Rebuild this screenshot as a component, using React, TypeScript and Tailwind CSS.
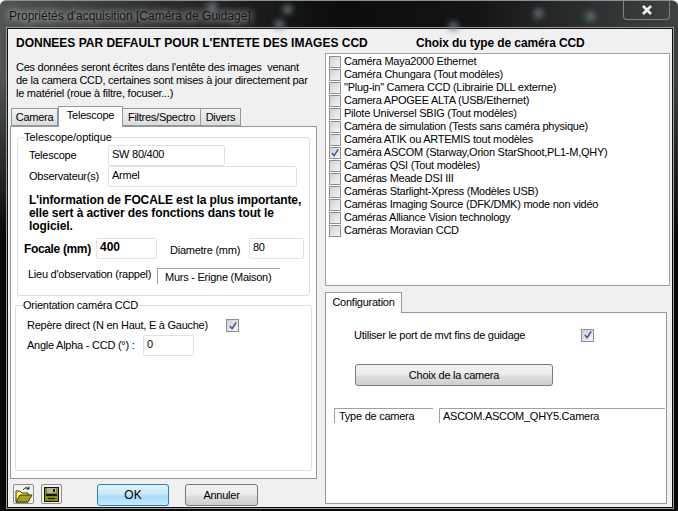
import React from "react";

const cameras: [string, boolean][] = [
  ["Caméra Maya2000 Ethernet", false],
  ["Caméra Chungara (Tout modèles)", false],
  ['"Plug-in" Camera CCD (Librairie DLL externe)', false],
  ["Camera APOGEE ALTA (USB/Ethernet)", false],
  ["Pilote Universel SBIG (Tout modèles)", false],
  ["Caméra de simulation (Tests sans caméra physique)", false],
  ["Caméra ATIK ou ARTEMIS tout modèles", false],
  ["Caméra ASCOM (Starway,Orion StarShoot,PL1-M,QHY)", true],
  ["Caméras QSI (Tout modèles)", false],
  ["Caméras Meade DSI III", false],
  ["Caméras Starlight-Xpress (Modèles USB)", false],
  ["Caméras Imaging Source (DFK/DMK) mode non vidéo", false],
  ["Caméras Alliance Vision technology", false],
  ["Caméras Moravian CCD", false],
];

function Check({ on, small }: { on: boolean; small?: boolean }) {
  return (
    <span className={`${small ? "w-[12px] h-[12px]" : "w-[13px] h-[13px]"} shrink-0 border border-[#8e8f8f] bg-[linear-gradient(135deg,#d0d0d0,#f6f6f6)] flex items-center justify-center`}>
      {on && (
        <svg width="10" height="10" viewBox="0 0 11 11">
          <path d="M2 5.5 L4.5 8.5 L9 1.5" fill="none" stroke="#3c5aa8" strokeWidth="1.8" />
        </svg>
      )}
    </span>
  );
}

function Tab({ label, active, w }: { label: string; active?: boolean; w: string }) {
  return (
    <div
      className={
        active
          ? `${w} h-[21px] -mb-px relative z-10 bg-white border border-b-0 border-[#8e9aa0] flex items-center justify-center pb-[3px] whitespace-nowrap`
          : `${w} h-[18px] bg-[linear-gradient(#f4f4f4,#dcdcdc)] border border-[#8e9aa0] -ml-px flex items-center justify-center whitespace-nowrap`
      }
    >
      {label}
    </div>
  );
}

function Field({ w, children, bold }: { w: string; children?: React.ReactNode; bold?: boolean }) {
  return (
    <div className={`${w} h-[21px] shrink-0 border border-[#dfe3e8] rounded-[2px] bg-white pl-[3px] pb-[3px] flex items-center whitespace-nowrap ${bold ? "font-bold text-[12px] tracking-normal" : ""}`}>
      {children}
    </div>
  );
}

function Folder() {
  return (
    <svg width="19" height="19" viewBox="0 0 19 19">
      <path d="M2 6 L2 17 L14 17 L14 8 L8 8 L6 6 Z" fill="#fff46a" stroke="#3a3a00" strokeWidth="1" />
      <path d="M2 17 L6 10 L18 10 L14 17 Z" fill="#a3a024" stroke="#3a3a00" strokeWidth="1" />
      <path d="M9 5 Q12 1 15 4 M15 4 L15 1.5 M15 4 L12.5 4" fill="none" stroke="#111" strokeWidth="1" />
    </svg>
  );
}

function Floppy() {
  return (
    <svg width="17" height="17" viewBox="0 0 17 17">
      <rect x="1" y="1" width="15" height="15" fill="#111" />
      <rect x="2" y="2" width="13" height="13" fill="#8a8a10" />
      <rect x="4" y="2" width="9" height="5" fill="#b4b4a0" />
      <rect x="10" y="3" width="2" height="3" fill="#111" />
      <rect x="3" y="8" width="11" height="2" fill="#111" />
      <rect x="4" y="10" width="9" height="5" fill="#8a8a10" />
      <rect x="5" y="12" width="7" height="1" fill="#111" />
    </svg>
  );
}

const stars = [
  "left-[276px] top-[4px]",
  "left-[268px] top-[19px]",
  "left-[442px] top-[21px]",
  "left-[527px] top-[8px]",
  "left-[579px] top-[11px]",
  "left-[201px] top-[1px]",
];

export default function App() {
  return (
    <div className="w-[678px] h-[511px] overflow-hidden rounded-t-[6px] border-t border-[#8c8f8f] bg-[linear-gradient(180deg,transparent_15%,#0a0a0a_45%),linear-gradient(90deg,#505454_0%,#2a2c2c_25%,#0c0c0c_50%,#141414_70%,#2e3131_88%,#3d4141_100%)] flex flex-col pl-[7px] pr-[5px] pb-[3px] text-[11px] tracking-[-0.25px] leading-[13px] text-black font-['Liberation_Sans',sans-serif]">
      <div className="h-[27px] shrink-0 flex items-start justify-between relative">
        {stars.map((s) => (
          <span key={s} className={`absolute ${s} w-[9px] h-[9px] rounded-full bg-[#6a7c84] blur-[3px]`} />
        ))}
        <div className="relative pl-[2px] pt-[7px] text-[12px] tracking-normal leading-[16px] text-[#141414] [text-shadow:0_0_7px_rgba(255,255,255,0.6),0_0_10px_rgba(255,255,255,0.5),0_0_12px_rgba(255,255,255,0.4)]">Propriétés d'acquisition [Caméra de Guidage]</div>
        <div className="w-[47px] h-[19px] mr-[3px] border border-t-0 border-[#7c8283] rounded-b-[4px] flex items-center justify-center">
          <svg width="10" height="10" viewBox="0 0 10 10">
            <path d="M1 1 L9 9 M9 1 L1 9" stroke="#f2f2f2" strokeWidth="2.6" />
          </svg>
        </div>
      </div>
      <div className="flex-1 min-h-0 bg-[#f0f0f0] border border-[#111] outline outline-1 outline-[#9a9d9d] flex">
        <div className="w-[317px] shrink-0 flex flex-col pl-[2px]">
          <div className="pl-[6px] pt-[7px] font-bold text-[12px] leading-[14px] tracking-normal whitespace-nowrap">DONNEES PAR DEFAULT POUR L'ENTETE DES IMAGES CCD</div>
          <div className="pl-[6px] pt-[11px] h-[55px] whitespace-nowrap shrink-0">
            Ces données seront écrites dans l'entête des images&nbsp; venant<br />
            de la camera CCD, certaines sont mises à jour directement par<br />
            le matériel (roue à filtre, focuser...)
          </div>
          <div className="flex items-end pl-[2px] h-[21px] shrink-0 relative">
            <Tab label="Camera" w="w-[47px]" />
            <Tab label="Telescope" active w="w-[65px]" />
            <Tab label="Filtres/Spectro" w="w-[79px]" />
            <Tab label="Divers" w="w-[41px]" />
          </div>
          <div className="w-[307px] h-[353px] bg-white border border-[#8e9aa0] pt-[4px] px-[4px] flex flex-col gap-[3px] shrink-0">
            <fieldset className="h-[165px] ml-[2px] mr-[2px] border border-[#d5dfe5] rounded-[3px] shrink-0">
              <legend className="ml-[6px] leading-[13px] whitespace-nowrap tracking-[-0.05px]">Telescope/optique</legend>
              <div className="flex items-center pl-[11px] mt-[1px]">
                <span className="w-[79px] shrink-0 whitespace-nowrap">Telescope</span>
                <Field w="w-[117px]">SW 80/400</Field>
              </div>
              <div className="flex items-center pl-[11px]">
                <span className="w-[79px] shrink-0 whitespace-nowrap">Observateur(s)</span>
                <Field w="w-[189px]">Armel</Field>
              </div>
              <div className="pl-[11px] pt-[7px] font-bold text-[12px] leading-[13px] tracking-[-0.1px] h-[51px] whitespace-nowrap">
                L'information de FOCALE est la plus importante,<br />
                elle sert à activer des fonctions dans tout le<br />
                logiciel.
              </div>
              <div className="flex items-center pl-[6px]">
                <span className="w-[72px] shrink-0 font-bold text-[12px] tracking-[-0.35px] whitespace-nowrap pt-[2px]">Focale (mm)</span>
                <Field w="w-[61px]" bold>400</Field>
                <span className="ml-[13px] w-[79px] shrink-0 whitespace-nowrap pt-[3px]">Diametre (mm)</span>
                <Field w="w-[55px]">80</Field>
              </div>
              <div className="flex items-start pl-[10px] mt-[9px]">
                <span className="w-[129px] shrink-0 whitespace-nowrap">Lieu d'observation (rappel)</span>
                <div className="w-[123px] h-[16px] shrink-0 border-l border-t border-[#a0a0a0] pl-[7px] pt-[2px] whitespace-nowrap">Murs - Erigne (Maison)</div>
              </div>
            </fieldset>
            <fieldset className="h-[172px] border border-[#d5dfe5] rounded-[3px] shrink-0">
              <legend className="ml-[7px] leading-[13px] whitespace-nowrap">Orientation caméra CCD</legend>
              <div className="flex items-center pl-[11px] mt-[7px]">
                <span className="w-[199px] shrink-0 whitespace-nowrap">Repère direct (N en Haut, E à Gauche)</span>
                <Check on />
              </div>
              <div className="flex items-center pl-[11px] mt-[3px]">
                <span className="w-[116px] shrink-0 whitespace-nowrap">Angle Alpha - CCD (°) :</span>
                <Field w="w-[51px]">0</Field>
              </div>
            </fieldset>
          </div>
          <div className="flex items-start pl-[3px] pt-[5px]">
            <div className="w-[21px] h-[20px] border border-[#8e8e8e] rounded-[2px] bg-[#f2f2f2] flex items-center justify-center"><Folder /></div>
            <div className="w-[21px] h-[20px] ml-[7px] border border-[#8e8e8e] rounded-[2px] bg-[#f2f2f2] flex items-center justify-center"><Floppy /></div>
            <div className="w-[72px] h-[22px] ml-[35px] border border-[#2c7fb8] rounded-[3px] bg-[linear-gradient(#e3f4fd_0%,#c4e6fb_50%,#a8d9f8_55%,#c7e9fc_100%)] flex items-center justify-center text-[12px] tracking-normal">OK</div>
            <div className="w-[73px] h-[22px] ml-[16px] border border-[#7a7a7a] rounded-[3px] bg-[linear-gradient(#f2f2f2_0%,#ebebeb_50%,#dddddd_55%,#cfcfcf_100%)] flex items-center justify-center">Annuler</div>
          </div>
        </div>
        <div className="flex-1 min-w-0 flex flex-col pt-[7px]">
          <div className="pl-[91px] font-bold text-[12px] leading-[14px] tracking-[-0.1px] whitespace-nowrap">Choix du type de caméra CCD</div>
          <div className="w-[345px] h-[233px] mt-[3px] bg-white border border-[#a0a0a0] pt-[1px] pl-[3px] shrink-0">
            {cameras.map(([name, on]) => (
              <div key={name} className="h-[13px] flex items-center gap-[3px] whitespace-nowrap">
                <Check on={on} small />
                <span>{name}</span>
              </div>
            ))}
          </div>
          <div className="w-[77px] h-[21px] mt-[6px] -mb-px relative z-10 bg-white border border-b-0 border-[#8e9aa0] flex items-center justify-center pb-[2px] shrink-0">Configuration</div>
          <div className="w-[342px] h-[192px] bg-white border border-[#8e9aa0] shrink-0 flex flex-col">
            <div className="flex items-center pl-[28px] mt-[15px]">
              <span className="w-[227px] shrink-0 whitespace-nowrap pt-px">Utiliser le port de mvt fins de guidage</span>
              <Check on />
            </div>
            <div className="w-[198px] h-[22px] ml-[29px] mt-[22px] border border-[#7a7a7a] rounded-[3px] bg-[linear-gradient(#f2f2f2_0%,#ebebeb_50%,#dddddd_55%,#cfcfcf_100%)] flex items-center justify-center">Choix de la camera</div>
            <div className="flex ml-[8px] mt-[22px]">
              <div className="w-[99px] h-[15px] border-l border-t border-[#a0a0a0] pl-[4px] pt-px whitespace-nowrap">Type de camera</div>
              <div className="w-[226px] h-[15px] ml-[6px] border-l border-t border-[#a0a0a0] pl-[3px] pt-px whitespace-nowrap">ASCOM.ASCOM_QHY5.Camera</div>
            </div>
          </div>
        </div>
      </div>
    </div>
  );
}
